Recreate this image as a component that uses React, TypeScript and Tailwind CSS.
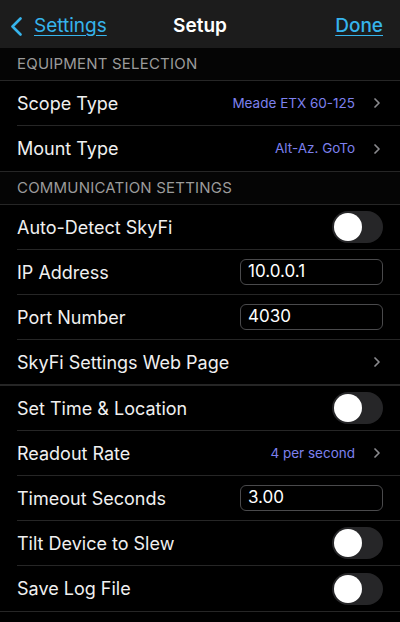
import { ChevronRight } from 'lucide-react'

type Row =
  | { kind: 'link'; label: string; value?: string }
  | { kind: 'toggle'; label: string }
  | { kind: 'input'; label: string; value: string }

function SectionHeader({ title }: { title: string }) {
  return (
    <div className="flex h-[33px] items-center border-b border-[#262626] bg-[#050505] px-[17px] pt-[1px] text-[15px] tracking-[0.2px] text-[#9b9b9b]">
      {title}
    </div>
  )
}

function Toggle() {
  return (
    <div className="flex h-[32px] w-[51px] items-center rounded-full bg-[#262628] p-[2px]">
      <div className="h-[28px] w-[28px] rounded-full bg-white" />
    </div>
  )
}

function SettingRow({ row, last, full }: { row: Row; last?: boolean; full?: boolean }) {
  return (
    <div className={`flex h-[45px] items-center ${full ? '' : 'pl-[17px]'}`}>
      <div
        className={`flex h-full flex-1 items-center justify-between pr-[17px] ${
          last ? '' : 'border-b border-[#262626]'
        } ${full ? 'pl-[17px]' : ''}`}
      >
        <span className="text-[18px] text-[#f0f0f0]">{row.label}</span>
        {row.kind === 'link' && (
          <div className="flex items-center gap-[14px]">
            {row.value && <span className="text-[13.5px] text-[#7d80ee]">{row.value}</span>}
            <ChevronRight size={16} strokeWidth={2.6} className="-mr-[2px] text-[#8a8a8e]" />
          </div>
        )}
        {row.kind === 'toggle' && <Toggle />}
        {row.kind === 'input' && (
          <div className="flex h-[26px] w-[143px] items-center rounded-[6px] border border-[#4a4a4c] px-[7px] text-[17px] text-white">
            {row.value}
          </div>
        )}
      </div>
    </div>
  )
}

export default function App() {
  return (
    <div className="h-[622px] w-[400px] overflow-hidden bg-black font-['Inter','Roboto',sans-serif]">
      <div className="grid h-[48px] grid-cols-[1fr_auto_1fr] items-center bg-[#1c1c1c] px-[17px] pt-[4px]">
        <div className="-ml-[8px] flex items-center gap-[11px] text-[#36b4ec]">
          <svg width="14" height="19" viewBox="0 0 14 19" fill="none">
            <path d="M11.5 1.5 L3.5 9.5 L11.5 17.5" stroke="currentColor" strokeWidth="2.6" strokeLinecap="round" strokeLinejoin="round" />
          </svg>
          <span className="text-[19px] underline underline-offset-[3px]">Settings</span>
        </div>
        <span className="text-[19px] font-semibold text-white">Setup</span>
        <span className="justify-self-end text-[19px] font-medium text-[#36b4ec] underline underline-offset-[3px]">
          Done
        </span>
      </div>

      <SectionHeader title="EQUIPMENT SELECTION" />
      <SettingRow row={{ kind: 'link', label: 'Scope Type', value: 'Meade ETX 60-125' }} />
      <SettingRow row={{ kind: 'link', label: 'Mount Type', value: 'Alt-Az. GoTo' }} last />
      <div className="border-t border-[#262626]" />

      <SectionHeader title="COMMUNICATION SETTINGS" />
      <SettingRow row={{ kind: 'toggle', label: 'Auto-Detect SkyFi' }} />
      <SettingRow row={{ kind: 'input', label: 'IP Address', value: '10.0.0.1' }} />
      <SettingRow row={{ kind: 'input', label: 'Port Number', value: '4030' }} />
      <SettingRow row={{ kind: 'link', label: 'SkyFi Settings Web Page' }} full />
      <div className="border-t border-[#262626]" />
      <SettingRow row={{ kind: 'toggle', label: 'Set Time & Location' }} />
      <SettingRow row={{ kind: 'link', label: 'Readout Rate', value: '4 per second' }} />
      <SettingRow row={{ kind: 'input', label: 'Timeout Seconds', value: '3.00' }} />
      <SettingRow row={{ kind: 'toggle', label: 'Tilt Device to Slew' }} />
      <SettingRow row={{ kind: 'toggle', label: 'Save Log File' }} last />
      <div className="border-t border-[#262626]" />
    </div>
  )
}
